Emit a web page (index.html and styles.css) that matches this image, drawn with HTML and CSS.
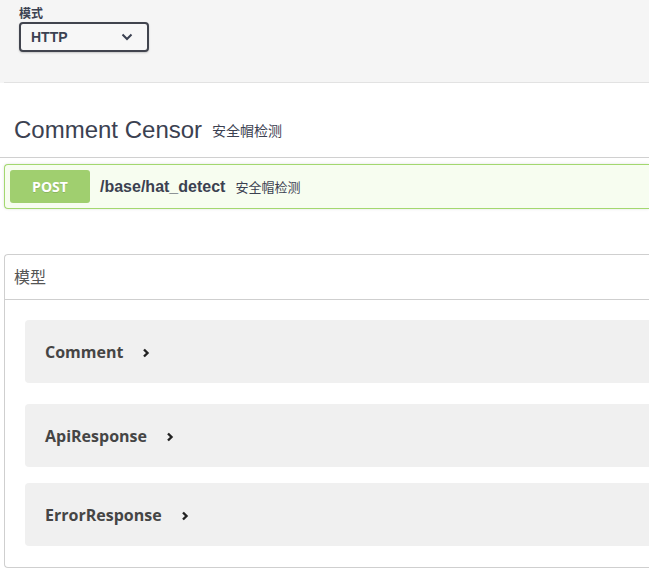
FILE: index.html
```html
<!DOCTYPE html>
<html lang="zh-CN">
<head>
    <meta charset="UTF-8">
    <meta name="viewport" content="width=device-width, initial-scale=1.0">
    <title>Comment Censor</title>
    <link rel="stylesheet" href="styles.css">
</head>
<body>
    <div class="scheme-container">
        <div class="schemes">
            <label class="schemes-title">模式</label>
            <div class="select">
                <span>HTTP</span>
                <svg width="12" height="8" viewBox="0 0 12 8"><path d="M1.5 1.5 L6 6 L10.5 1.5" fill="none" stroke="#3b4151" stroke-width="2"/></svg>
            </div>
        </div>
    </div>

    <div class="wrapper">
        <h3 class="opblock-tag">
            <span class="tag-name">Comment Censor</span>
            <small>安全帽检测</small>
        </h3>

        <div class="opblock">
            <span class="method">POST</span>
            <span class="path">/base/hat_detect</span>
            <span class="summary">安全帽检测</span>
        </div>

        <section class="models">
            <h4 class="models-title">模型</h4>
            <div class="models-list">
                <div class="model-box">
                    <span class="model-title">Comment</span>
                    <svg class="arrow" width="8" height="10" viewBox="0 0 8 10"><path d="M2 1.5 L5.5 5 L2 8.5" fill="none" stroke="#222" stroke-width="2.4"/></svg>
                </div>
                <div class="model-box">
                    <span class="model-title">ApiResponse</span>
                    <svg class="arrow" width="8" height="10" viewBox="0 0 8 10"><path d="M2 1.5 L5.5 5 L2 8.5" fill="none" stroke="#222" stroke-width="2.4"/></svg>
                </div>
                <div class="model-box">
                    <span class="model-title">ErrorResponse</span>
                    <svg class="arrow" width="8" height="10" viewBox="0 0 8 10"><path d="M2 1.5 L5.5 5 L2 8.5" fill="none" stroke="#222" stroke-width="2.4"/></svg>
                </div>
            </div>
        </section>
    </div>
</body>
</html>
```

FILE: styles.css
```css
body {
    margin: 0;
    font-family: "Liberation Sans", Arial, "Noto Sans CJK SC", sans-serif;
    color: #3b4151;
    background-color: white;
    overflow: hidden;
}
.scheme-container {
    background-color: #f5f5f5;
    height: 82px;
    margin-left: 4px;
    border-bottom: 1px solid #e2e2e2;
    box-shadow: -4px 0 0 #f5f5f5;
}
.schemes {
    padding: 5px 0 0 15px;
}
.schemes-title {
    display: block;
    font-family: "Noto Sans CJK SC", sans-serif;
    font-size: 12px;
    font-weight: bold;
    line-height: 16px;
    color: #3b4151;
}
.select {
    box-sizing: border-box;
    width: 130px;
    height: 30px;
    margin-top: 1px;
    padding: 0 14px 0 10px;
    border: 2px solid #41444e;
    border-radius: 4px;
    background-color: #f7f7f7;
    display: flex;
    align-items: center;
    justify-content: space-between;
    font-size: 14px;
    font-weight: bold;
    box-shadow: 0 1px 2px rgba(0,0,0,0.2);
}
.wrapper {
    padding: 0 0 0 4px;
}
.opblock-tag {
    margin: 0 0 0 -4px;
    height: 75px;
    box-sizing: border-box;
    padding: 20px 0 0 14px;
    display: flex;
    align-items: center;
    border-bottom: 1px solid #d0d0d0;
    font-weight: normal;
}
.tag-name {
    font-size: 24px;
    color: #3b4151;
}
.opblock-tag small {
    margin-left: 10px;
    font-family: "Noto Sans CJK SC", sans-serif;
    font-size: 14px;
    color: #3b4151;
}
.opblock {
    margin-top: 6px;
    height: 45px;
    box-sizing: border-box;
    border: 1px solid #a3d86f;
    border-right: none;
    border-radius: 4px 0 0 4px;
    background-color: #f7fdf0;
    display: flex;
    align-items: center;
    padding-left: 5px;
    box-shadow: 0 0 3px rgba(0,0,0,0.12);
}
.method {
    width: 80px;
    height: 33px;
    border-radius: 3px;
    background-color: #a0cf6f;
    color: white;
    font-family: "Open Sans", sans-serif;
    font-weight: bold;
    font-size: 14px;
    display: flex;
    align-items: center;
    justify-content: center;
    text-shadow: 0 1px 0 rgba(0,0,0,0.15);
}
.path {
    margin-left: 10px;
    font-size: 16px;
    font-weight: bold;
    color: #3b4151;
}
.summary {
    margin-left: 10px;
    font-family: "Noto Sans CJK SC", sans-serif;
    font-size: 13px;
    color: #3b4151;
}
.models {
    margin-top: 45px;
    border: 1px solid #cfcfcf;
    border-right: none;
    border-radius: 4px 0 0 4px;
    height: 314px;
    box-sizing: border-box;
}
.models-title {
    margin: 0;
    height: 45px;
    box-sizing: border-box;
    padding: 0 0 3px 9px;
    display: flex;
    align-items: center;
    border-bottom: 1px solid #cfcfcf;
    font-family: "Noto Sans CJK SC", sans-serif;
    font-weight: normal;
    font-size: 16px;
    color: #555;
}
.models-list {
    padding: 20px 0 0 20px;
    display: flex;
    flex-direction: column;
    gap: 16px;
}
.model-box {
    height: 63px;
    border-radius: 4px 0 0 4px;
    background-color: #f0f0f0;
    display: flex;
    align-items: center;
    padding-left: 20px;
}
.model-box:first-child {
    margin-bottom: 5px;
}
.model-title {
    font-family: "Open Sans", sans-serif;
    font-size: 16px;
    font-weight: bold;
    color: #454545;
}
.arrow {
    margin-left: 19px;
    margin-top: 3px;
}
```
